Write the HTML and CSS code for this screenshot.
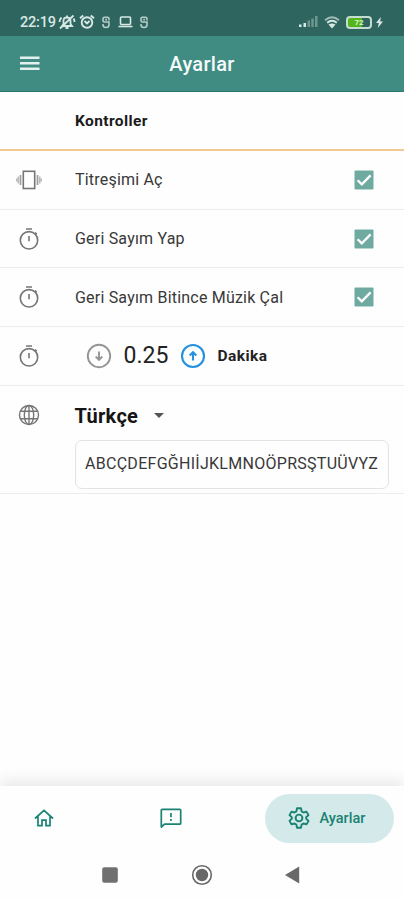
FILE: index.html
```html
<!DOCTYPE html>
<html lang="tr">
<head>
<meta charset="utf-8">
<meta name="viewport" content="width=device-width, initial-scale=1">
<title>Ayarlar</title>
<link rel="stylesheet" href="styles.css">
</head>
<body>
<svg class="defs" aria-hidden="true">
  <symbol id="timer" viewBox="0 0 22 24"><g fill="none" stroke="currentColor" stroke-width="1.6"><circle cx="11" cy="13.300" r="8.700"/><path d="M8 2h6M11 9v5.300M17 5.500l1.800 1.800"/></g></symbol>
  <symbol id="check" viewBox="0 0 20 20"><rect x=".5" y=".5" width="19" height="19" rx="1" fill="#6faaa1"/><path d="M3.600 10.200l4.200 4.200 8.800-9" fill="none" stroke="#fff" stroke-width="2.300"/></symbol>
  <symbol id="badge" viewBox="0 0 10 13"><path d="M8 4.500V2.700q0-1.500-1.500-1.500h-3Q2 1.200 2 2.700v1.800Q2 6 3.500 6H8v2.800q0 2.700-3 2.700T2 8.800V8M4.200 3.600H6" fill="none" stroke="currentColor" stroke-width="1.600"/></symbol>
</svg>
<div class="status">
  <span class="clock">22:19</span>
  <svg class="s-bell" viewBox="0 0 18 16" fill="none" stroke="currentColor" stroke-width="1.8"><path d="M4 12h10l-1.500-2V7q0-3.500-3.500-3.500T5.500 7v3zM7.500 14h3M9 1.500v2M2 14.500L15.500 1.500M1.500 8q0-2.500 2-4.500M16.500 8q0-2-1-3.500"/></svg>
  <svg class="s-alarm" viewBox="0 0 16 16" fill="none" stroke="currentColor" stroke-width="1.900"><circle cx="8" cy="8.500" r="5.300"/><path d="M1 4.300l3.200-2.800M15 4.300l-3.200-2.800M5.500 7l2.500 2.400L10.500 7"/></svg>
  <svg class="s-badge"><use href="#badge"/></svg>
  <svg class="s-laptop" viewBox="0 0 15 12" fill="none" stroke="currentColor" stroke-width="1.600"><rect x="2.500" y="1" width="10" height="7.500" rx="1"/><path d="M.5 10.500h14"/></svg>
  <svg class="s-badge"><use href="#badge"/></svg>
  <span class="grow"></span>
  <svg class="s-signal" viewBox="0 0 19 12" fill="currentColor"><path d="M0 8.500h2.500V11H0zM4.500 7H7v4H4.500z"/><path opacity=".38" d="M8.500 4.500H11V11H8.500zM12.300 2.500h2.400V11h-2.400zM16 0h2.500v11H16z"/></svg>
  <svg class="s-wifi" viewBox="0 0 16 13" fill="none" stroke="currentColor" stroke-width="1.900"><path opacity=".65" d="M1 4.300q7-6 14 0"/><path d="M3.200 6.700q4.800-4 9.600 0"/><path d="M4.500 8.600q3.500-2.400 7 0L8 12.500z" fill="currentColor" stroke="none"/></svg>
  <div class="battery"><span>72</span></div>
  <svg class="s-bolt" viewBox="0 0 7 11" fill="currentColor"><path d="M4.800 0L0 6h2.800L1.800 11 7 4.600H4.200z"/></svg>
</div>
<header class="appbar">
  <svg class="menu" viewBox="0 0 20 15"><path d="M0 1.800h19.500M0 7.300h19.500M0 12.800h19.500" stroke="#e3f1ee" stroke-width="2.400"/></svg>
  <h1>Ayarlar</h1>
</header>
<main>
  <section class="row heading"><span class="label bold">Kontroller</span></section>
  <section class="row">
    <span class="icon"><svg class="vibrate" viewBox="0 0 26 20" fill="none" stroke="currentColor"><rect x="7.300" y="1.300" width="11.400" height="17.200" stroke-width="1.600"/><path d="M4.500 5v10M21.500 5v10" stroke-width="1.700" opacity=".7"/><path d="M2.300 6.500v7M23.700 6.500v7M.7 8.500v3M25.300 8.500v3" stroke-width="1.500" opacity=".5"/></svg></span>
    <span class="label">Titreşimi Aç</span><svg class="check"><use href="#check"/></svg>
  </section>
  <section class="row">
    <span class="icon"><svg class="timer"><use href="#timer"/></svg></span>
    <span class="label">Geri Sayım Yap</span><svg class="check"><use href="#check"/></svg>
  </section>
  <section class="row">
    <span class="icon"><svg class="timer"><use href="#timer"/></svg></span>
    <span class="label">Geri Sayım Bitince Müzik Çal</span><svg class="check"><use href="#check"/></svg>
  </section>
  <section class="row">
    <span class="icon"><svg class="timer"><use href="#timer"/></svg></span>
    <div class="stepper">
      <svg class="step" viewBox="0 0 26 26" fill="none" stroke="#959595" stroke-width="1.900"><circle cx="13" cy="13" r="11.200"/><path d="M13 8.500v8.500M9.700 13.500l3.300 3.300 3.300-3.300"/></svg>
      <span class="value">0.25</span>
      <svg class="step" viewBox="0 0 26 26" fill="none" stroke="#2390e0" stroke-width="2.100"><circle cx="13" cy="13" r="11"/><path d="M13 17.500V9M9.700 12.500L13 9.200l3.300 3.300"/></svg>
      <span class="unit">Dakika</span>
    </div>
  </section>
  <section class="row language">
    <span class="icon"><svg class="globe" viewBox="0 0 22 22" fill="none" stroke="currentColor" stroke-width="1.400"><circle cx="11" cy="11" r="9.500"/><ellipse cx="11" cy="11" rx="4.700" ry="9.500"/><path d="M11 1.500v19M2.500 7.300h17M2.500 14.700h17"/></svg></span>
    <div class="lang-body">
      <div class="select"><span>Türkçe</span><i class="caret"></i></div>
      <div class="alphabet"><span>ABCÇDEFGĞHIİJKLMNOÖPRSŞTUÜVYZ</span></div>
    </div>
  </section>
</main>
<nav class="tabs">
  <a class="tab"><svg class="home" viewBox="0 0 20 18" fill="none" stroke="currentColor" stroke-width="1.700"><path d="M1 9.500L10 1.300l9 8.200M4 7.500v9.200h4v-5.500h4v5.500h4V7.500"/></svg></a>
  <a class="tab"><svg class="feedback" viewBox="0 0 22 21" fill="none" stroke="currentColor" stroke-width="1.700"><path d="M1.300 19V2.300q0-1 1-1h17.400q1 0 1 1v12.900q0 1-1 1H4.500z" stroke-linejoin="round"/><path d="M11 5v4.300M11 11v2"/></svg></a>
  <a class="tab active"><svg class="gear" viewBox="0 0 22 22" fill="none" stroke="currentColor" stroke-width="1.900" stroke-linejoin="round"><path d="M9 1.300h4l.6 3.100 1.900 1.100 3-.9 2 3.500-2.300 2.100v1.600l2.300 2.100-2 3.500-3-.9-1.900 1.100-.6 3.100H9l-.6-3.100-1.900-1.100-3 .9-2-3.500 2.300-2.100v-1.600L1.500 8.100l2-3.500 3 .9 1.900-1.100z"/><circle cx="11" cy="11" r="3.400"/></svg><span>Ayarlar</span></a>
</nav>
<footer class="system">
  <svg viewBox="0 0 24 24"><rect x="4.200" y="4.200" width="15.600" height="15.600" rx="2" fill="#707070"/></svg>
  <svg viewBox="0 0 24 24"><circle cx="12" cy="12" r="9.300" fill="none" stroke="#686868" stroke-width="1.600"/><circle cx="12" cy="12" r="6.200" fill="#686868"/></svg>
  <svg viewBox="0 0 24 24"><path d="M4 12L18.200 3.500v17z" fill="#686868"/></svg>
</footer>
</body>
</html>
```
FILE: styles.css
```css
* { box-sizing: border-box; }
body {
  margin: 0;
  height: 900px;
  display: flex;
  flex-direction: column;
  overflow: hidden;
  background: #fefefe;
  color: #222;
  font-family: Roboto, "Noto Sans", sans-serif;
}
svg { display: block; flex: none; }
.defs { position: absolute; width: 0; height: 0; }

.status {
  height: 36px;
  padding: 8px 21px 0 20px;
  display: flex;
  align-items: center;
  background: #2e665f;
  color: #d8e8e4;
}
.clock { width: 38px; font-size: 14.5px; font-weight: 500; letter-spacing: -.2px; white-space: nowrap; }
.s-bell { width: 18px; height: 16px; }
.s-alarm { width: 16px; height: 16px; margin-left: 3px; }
.s-badge { width: 10px; height: 13px; margin-left: 6px; opacity: .8; }
.s-laptop { width: 15px; height: 12px; margin-left: 7px; }
.grow { flex: 1; }
.s-signal { width: 19px; height: 12px; }
.s-wifi { width: 16px; height: 13px; margin-left: 6px; }
.battery {
  width: 26px;
  height: 13px;
  margin: 0 4px 0 6px;
  border: 2px solid #c5dcd0;
  border-radius: 4px;
  background: linear-gradient(90deg, #55b51c 65%, #2e665f 65%);
  color: #d9f3bd;
  font-size: 8px;
  font-weight: 700;
  line-height: 9px;
  text-align: center;
}
.s-bolt { width: 7px; height: 11px; }

.appbar {
  height: 56px;
  padding: 0 20px;
  display: grid;
  grid-template-columns: 20px 1fr 20px;
  align-items: center;
  background: #408c82;
  border-bottom: 1px solid #257a6d;
}
.menu { width: 20px; height: 15px; }
.appbar h1 {
  margin: 0;
  color: #f5fbfa;
  font-size: 20px;
  font-weight: 500;
  letter-spacing: .3px;
  text-align: center;
}

.row {
  height: 58.7px;
  padding-right: 30.5px;
  display: flex;
  align-items: center;
  border-bottom: 1.5px solid #ececec;
}
.heading { height: 59px; border-bottom: 2px solid #f2c894; padding-left: 75px; }
.icon { width: 58px; margin-right: 17px; display: flex; justify-content: center; color: #757575; }
.vibrate { width: 26px; height: 20px; }
.timer { width: 22px; height: 24px; }
.globe { width: 22px; height: 22px; }
.label { flex: 1; font-size: 16px; letter-spacing: .2px; white-space: nowrap; color: #383838; }
.bold { font-size: 15.5px; font-weight: 700; letter-spacing: .4px; color: #1b1b1b; }
.check { width: 20px; height: 20px; }
.stepper { display: flex; align-items: center; padding-left: 11px; }
.step { width: 26px; height: 26px; }
.value { width: 68px; text-align: center; font-size: 23px; }
.unit { margin-left: 11.5px; font-size: 15.5px; font-weight: 700; letter-spacing: .45px; }

.language { height: 108px; align-items: flex-start; padding: 0 15px 0 0; }
.language .icon { padding-top: 18px; }
.lang-body { flex: 1; margin-left: -.5px; }
.select { height: 54px; padding-top: 6px; display: flex; align-items: center; font-size: 20px; font-weight: 700; letter-spacing: .3px; color: #151515; }
.caret { margin-left: 16px; border: 5px solid transparent; border-top-color: #555; border-bottom: 0; }
.alphabet {
  height: 49px;
  padding: 0 0 2px 9.5px;
  display: flex;
  align-items: center;
  border: 1.5px solid #e2e2e2;
  border-radius: 7px;
  font-size: 16px;
  letter-spacing: .28px;
  white-space: nowrap;
  color: #383838;
}

.tabs {
  margin-top: auto;
  height: 64px;
  padding: 0 10px;
  display: grid;
  grid-template-columns: 67px 188px 129px;
  align-items: center;
  background: #fefefe;
  box-shadow: 0 -5px 14px rgba(0, 0, 0, .09);
  color: #198273;
}
.tab { display: flex; align-items: center; justify-content: center; }
.active {
  height: 49px;
  padding-left: 23px;
  justify-content: flex-start;
  border-radius: 25px;
  background: #d4e9e9;
  gap: 9.5px;
  font-size: 14.5px;
  font-weight: 500;
}
.active span { padding-top: 1px; }
.home { width: 20px; height: 18px; }
.feedback { width: 22px; height: 21px; }
.gear { width: 22px; height: 22px; }
.system { height: 50px; padding: 0 99px 0 98px; display: flex; align-items: center; justify-content: space-between; background: #fefefe; z-index: 1; }
.system svg { width: 24px; height: 24px; }
```
